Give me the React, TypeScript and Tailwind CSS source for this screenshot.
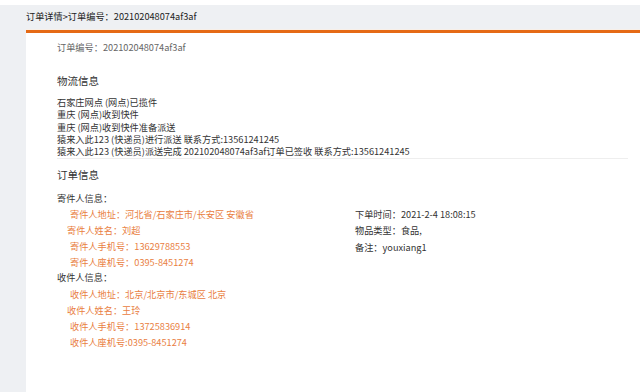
import React from "react";

const font = { fontFamily: '"Noto Sans CJK SC", "Noto Sans", sans-serif' };

export default function App() {
  const logistics = [
    "石家庄网点 (网点)已揽件",
    "重庆 (网点)收到快件",
    "重庆 (网点)收到快件准备派送",
    "猿来入此123 (快递员)进行派送 联系方式:13561241245",
    "猿来入此123 (快递员)派送完成 202102048074af3af订单已签收 联系方式:13561241245",
  ];
  return (
    <div
      className="w-[640px] h-[392px] overflow-hidden bg-[#eef0f3] flex flex-col text-[9.2px] text-[#333]"
      style={font}
    >
      <div className="h-[5px] bg-white shrink-0" />
      <div className="h-[24px] shrink-0 pl-[26px] leading-[23px] text-[#222]">
        订单详情&gt;订单编号：202102048074af3af
      </div>
      <div className="h-[1px] shrink-0 ml-[26px] bg-[#f7efe8]" />
      <div className="ml-[26px] flex-1 bg-white border-t-[3px] border-[#e56a15] pl-[31px] pr-[12px]">
        <div className="pt-[6px] leading-[16px] text-[#666]">订单编号：202102048074af3af</div>
        <div className="mt-[18px] leading-[16px] text-[10.5px] text-[#333]">物流信息</div>
        <div className="mt-[7px] border-b border-[#eeeeee] pb-[1px]">
          {logistics.map((l, i) => (
            <div key={i} className="leading-[12.3px] whitespace-nowrap">
              {l}
            </div>
          ))}
        </div>
        <div className="mt-[8px] leading-[16px] text-[10.5px]">订单信息</div>
        <div className="flex mt-[7px]">
          <div className="w-[298px] shrink-0">
            <div className="leading-[16px]">寄件人信息：</div>
            <div className="text-[#e9803f] leading-[16px]">
              <div className="pl-[13px]">寄件人地址：河北省/石家庄市/长安区 安徽省</div>
              <div className="pl-[10px]">寄件人姓名：刘超</div>
              <div className="pl-[13px]">寄件人手机号：13629788553</div>
              <div className="pl-[13px]">寄件人座机号：0395-8451274</div>
            </div>
            <div className="leading-[14px]">收件人信息：</div>
            <div className="text-[#e9803f] leading-[16px] pt-[2px]">
              <div className="pl-[13px]">收件人地址：北京/北京市/东城区 北京</div>
              <div className="pl-[10px]">收件人姓名：王玲</div>
              <div className="pl-[13px]">收件人手机号：13725836914</div>
              <div className="pl-[13px]">收件人座机号:0395-8451274</div>
            </div>
          </div>
          <div className="pt-[16px] leading-[16px]">
            <div>下单时间：2021-2-4 18:08:15</div>
            <div>物品类型：食品,</div>
            <div className="mt-[1px]">备注：youxiang1</div>
          </div>
        </div>
      </div>
    </div>
  );
}
